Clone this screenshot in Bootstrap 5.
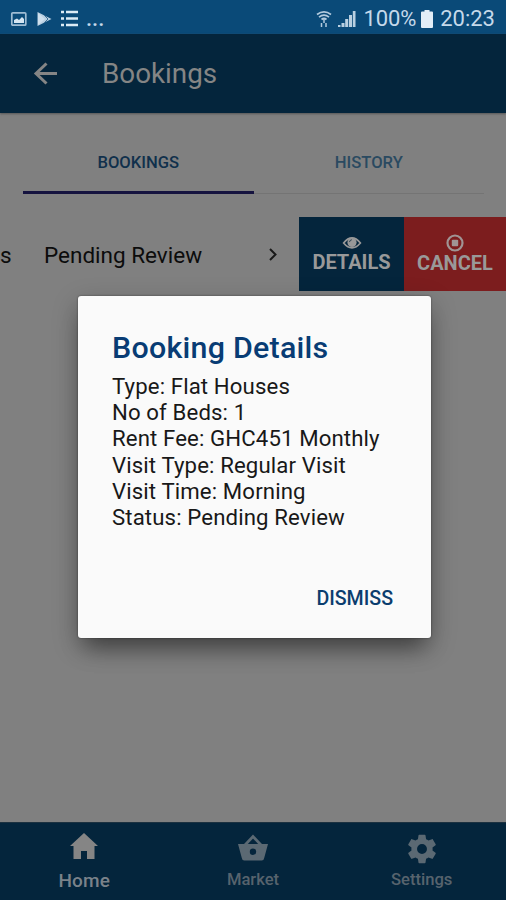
<!DOCTYPE html>
<html lang="en">
<head>
<meta charset="utf-8">
<meta name="viewport" content="width=device-width, initial-scale=1">
<title>Bookings</title>
<link href="https://cdn.jsdelivr.net/npm/bootstrap@5.3.0/dist/css/bootstrap.min.css" rel="stylesheet">
<style>
body{font-family:Roboto,"Liberation Sans",sans-serif;background:#808080;color:#0c0c0c;height:900px;overflow:hidden;line-height:1}
svg{display:block;flex:none}
.screen{height:900px}
.status{height:34px;background:#0a4a78;color:#c5d9ea;padding:3px 11px 0 10px;font-size:22px}
.status .dots{font-size:22px;margin-left:8px;font-weight:500}
.status .list-glyph{margin-left:7px}
.status .pct{margin-left:7px;letter-spacing:-.1px}
.status .battery{margin-left:5px}
.status .clock{margin-left:7px}
.appbar{height:79px;background:#04253c;padding-left:33px;box-shadow:0 1px 2px #555}
.appbar h1{font-size:27.8px;font-weight:400;margin:1px 0 0 45px;color:#858585}
.tabs{margin:0 22px 0 23px;height:81px;font-size:16.6px;font-weight:500}
.tabs a{flex:1 1 0;text-align:center;text-decoration:none;padding-top:42px;border-bottom:1px solid #747474;color:#2a4a61}
.tabs .current{color:#10304c;border-bottom:3px solid #15133f}
.booking{height:74px;margin-top:23px;font-size:22.5px}
.booking>span{padding-top:2px}
.type-end{width:44px}
.chevron{margin-right:22px}
.action{height:74px;color:#999;font-size:20px;font-weight:700}
.details{width:105px;background:#04253c;padding-top:19px}
.details span{margin-top:2px}
.cancel{width:102px;background:#7c1d1e;padding-top:17px}
.cancel span{margin-top:1px}
.bottom-bar{height:78px;background:#04253c;font-size:16.6px;color:#57636d;font-weight:500;border-top:1px solid #1c3140}
.bottom-bar .tab{width:169px;padding:9px 0 11px}
.bottom-bar .home{font-size:19px;color:#7a828a;letter-spacing:.2px;padding-bottom:10px}
.bottom-bar span{margin-top:auto}
.dialog-layer{position:absolute;left:78px;top:296px;width:353px;height:342px}
.dialog-box{height:342px;background:#fafafa;border-radius:3px;padding:35px 34px 0 34px;box-shadow:0 17px 22px -8px rgba(0,0,0,.38),0 8px 26px 1px rgba(0,0,0,.24),0 0 2px rgba(0,0,0,.5)}
.dialog-box h2{font-size:30.4px;font-weight:500;letter-spacing:.25px;color:#083c74;margin:0;line-height:34px;white-space:nowrap}
.dialog-box .facts{font-size:22.2px;letter-spacing:.12px;line-height:26.2px;margin-top:8px;color:#181818;white-space:nowrap}
.dismiss{font-size:19.6px;font-weight:500;color:#0b3d6e;padding:0;line-height:24px;border:0;margin:57px 4px 0 0}
</style>
</head>
<body>
<div class="screen d-flex flex-column">
<div class="status d-flex align-items-center">
  <svg width="18" height="16" viewBox="0 0 18 16"><rect x="1.800" y="1.800" width="14" height="12.400" rx="1" fill="none" stroke="#9fbcd3" stroke-width="1.700"/><path d="M4 12V9l3-1.500 2 1.500 3-3 2 2V12z" fill="#d6e6f2"/></svg>
  <svg class="ms-2" width="17" height="16" viewBox="0 0 17 16"><path d="M1.500 1 15.500 8 1.500 15z" fill="#b9d0e2"/><path d="M8 4l4 4-4 4" stroke="#3c6e94" stroke-width="1" fill="none"/><path d="M2 2 9 8 2 14z" fill="#cfe0ee"/></svg>
  <svg class="list-glyph" width="18" height="17" viewBox="0 0 18 17"><path d="M1 2h3M6 2h12M1 8.500h3M6 8.500h12M1 15h3M6 15h12" stroke="#dcebf5" stroke-width="2.600"/></svg>
  <span class="dots">...</span>
  <svg class="ms-auto" width="18" height="18" viewBox="0 0 18 18" fill="none" stroke="#b2cadd" stroke-width="1.700"><path d="M2 4.500Q9-.8 16 4.500M4 7.200Q9 3.200 14 7.200M6.500 9.500Q9 7.500 11.500 9.500"/><path d="M9 9v4M6.500 13v4M11 13v4" stroke-width="1.500"/></svg>
  <svg class="ms-1" width="19" height="18" viewBox="0 0 19 18" fill="#b9d0e1"><path d="M1 15h2.500v2H1zM4.500 13h3v4h-3zM8.200 9h3v8h-3zM12 5h3v12h-3zM15.800 1h2.700v16h-2.700z"/></svg>
  <span class="pct">100%</span>
  <svg class="battery" width="12" height="18" viewBox="0 0 12 18"><path d="M3.500 0h5v1.500H11q1 0 1 1V17q0 1-1 1H1q-1 0-1-1V2.500q0-1 1-1h2.500z" fill="#e3eef7"/></svg>
  <span class="clock">20:23</span>
</div>
<header class="appbar d-flex align-items-center">
  <svg width="24" height="24" viewBox="0 0 24 24" fill="none" stroke="#858585" stroke-width="3"><path d="M13.500 1.500 3 11.500 13.500 21.500M3 11.500h21"/></svg>
  <h1>Bookings</h1>
</header>
<nav class="tabs d-flex"><a class="current" href="#">BOOKINGS</a><a href="#">HISTORY</a></nav>
<main class="booking d-flex align-items-center">
  <span class="type-end">s</span><span>Pending Review</span>
  <svg class="chevron ms-auto" width="8" height="13" viewBox="0 0 8 13" fill="none" stroke="#191919" stroke-width="2"><path d="m1 1 5.500 5.500L1 12"/></svg>
  <div class="action details d-flex flex-column align-items-center">
    <svg width="20" height="14" viewBox="0 0 20 15"><path d="M1 7.500Q10-3.500 19 7.500 10 18 1 7.500z" fill="none" stroke="#999" stroke-width="1.800"/><circle cx="10" cy="7" r="4.900" fill="#999"/><path d="M7.300 6.500q.2-2.200 2.500-2.500" stroke="#273d4c" fill="none"/></svg><span>DETAILS</span>
  </div>
  <div class="action cancel d-flex flex-column align-items-center">
    <svg width="18" height="18" viewBox="0 0 18 18"><circle cx="9" cy="9" r="7.500" fill="none" stroke="#a09494" stroke-width="2.200"/><rect x="5.800" y="5.800" width="6.400" height="6.400" rx="1" fill="#a09494"/></svg><span>CANCEL</span>
  </div>
</main>
<nav class="bottom-bar d-flex mt-auto">
  <div class="tab home d-flex flex-column align-items-center"><svg width="28" height="28" viewBox="0 0 28 28"><path d="M14 1 0 14h3.500v13H11v-8h6v8h7.500V14H28z" fill="#858585"/></svg><span>Home</span></div>
  <div class="tab d-flex flex-column align-items-center"><svg width="30" height="30" viewBox="0 0 30 30"><path d="M7 13 15 4.500l8 8.500" fill="none" stroke="#5b6973" stroke-width="2.700"/><path fill-rule="evenodd" d="M0 12h30l-3.800 14q-.4 2.500-2.500 2.500H6.300q-2.100 0-2.500-2.500zM15 16.500a3.200 3.200 0 1 0 0 6.400 3.200 3.200 0 0 0 0-6.400z" fill="#5b6973"/></svg><span>Market</span></div>
  <div class="tab d-flex flex-column align-items-center"><svg width="34" height="34" viewBox="0 0 24 24"><path fill="#5b6973" d="M19.430 12.980c.04-.32.07-.64.07-.98s-.03-.66-.07-.98l2.110-1.650c.19-.15.24-.42.12-.64l-2-3.460c-.12-.22-.39-.3-.61-.22l-2.490 1c-.52-.4-1.080-.73-1.690-.98l-.38-2.650C14.460 2.180 14.250 2 14 2h-4c-.25 0-.46.18-.49.42l-.38 2.650c-.61.25-1.170.59-1.690.98l-2.490-1c-.23-.09-.49 0-.61.22l-2 3.460c-.13.22-.07.49.12.64l2.110 1.650c-.04.32-.07.65-.07.98s.03.66.07.98l-2.110 1.650c-.19.15-.24.42-.12.64l2 3.460c.12.22.39.3.61.22l2.490-1c.52.4 1.080.73 1.690.98l.38 2.650c.03.24.24.42.49.42h4c.25 0 .46-.18.49-.42l.38-2.650c.61-.25 1.170-.59 1.690-.98l2.490 1c.23.09.49 0 .61-.22l2-3.460c.12-.22.07-.49-.12-.64zM12 15.500A3.500 3.500 0 1 1 12 8.500a3.500 3.500 0 0 1 0 7z"/></svg><span>Settings</span></div>
</nav>
</div>
<div class="dialog-layer" role="dialog">
  <div class="dialog-box d-flex flex-column">
    <h2>Booking Details</h2>
    <div class="facts">
      <div>Type: Flat Houses</div><div>No of Beds: 1</div><div>Rent Fee: GHC451 Monthly</div><div>Visit Type: Regular Visit</div><div>Visit Time: Morning</div><div>Status: Pending Review</div>
    </div>
    <button class="btn dismiss align-self-end">DISMISS</button>
  </div>
</div>
<script src="https://cdn.jsdelivr.net/npm/bootstrap@5.3.0/dist/js/bootstrap.bundle.min.js"></script>
</body>
</html>
